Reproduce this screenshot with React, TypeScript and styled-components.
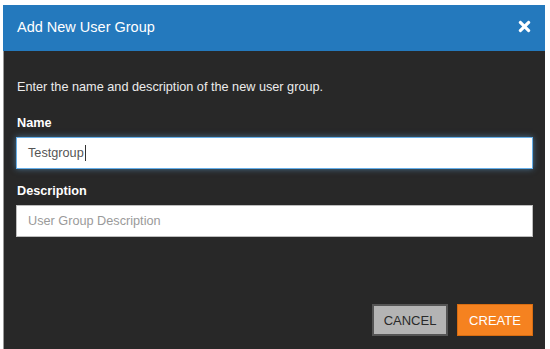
import React from "react";
import styled, { createGlobalStyle } from "styled-components";
import { FaTimes } from "react-icons/fa";

const Global = createGlobalStyle`
  html, body { margin: 0; padding: 0; background: #ffffff; }
  body { font-family: "Liberation Sans", Arial, sans-serif; }
`;

const Page = styled.div`
  padding: 5px 5px 0 3px;
  height: 349px;
  box-sizing: border-box;
  overflow: hidden;
`;

const Dialog = styled.div`
  width: 542px;
  height: 360px;
  display: flex;
  flex-direction: column;
  background: #282828;
`;

const Header = styled.div`
  height: 46px;
  box-sizing: border-box;
  background: #2479bd;
  display: flex;
  align-items: center;
  justify-content: space-between;
  padding: 0 12px 3px 14px;
`;

const Title = styled.h1`
  margin: 0;
  font-size: 14.5px;
  font-weight: normal;
  color: #ffffff;
`;

const Close = styled.button`
  border: 0;
  background: none;
  padding: 0;
  color: #ffffff;
  display: flex;
  align-items: center;
  cursor: pointer;
`;

const Body = styled.div`
  flex: 1;
  border-left: 1px solid #9a9a9a;
  padding: 27px 12px 0 12px;
  display: flex;
  flex-direction: column;
`;

const Intro = styled.p`
  margin: 0 0 18px 1px;
  font-size: 12.7px;
  line-height: 18px;
  color: #ececec;
`;

const Label = styled.label`
  margin: 0 0 5px 1px;
  font-size: 12.7px;
  line-height: 18px;
  font-weight: bold;
  color: #ffffff;
`;

const Field = styled.div<{ $focused?: boolean }>`
  height: 32px;
  box-sizing: border-box;
  background: #ffffff;
  border: 1px solid ${(p) => (p.$focused ? "#66afe9" : "#bdbdbd")};
  box-shadow: ${(p) =>
    p.$focused ? "0 0 6px rgba(102, 175, 233, 0.55)" : "none"};
  display: flex;
  align-items: center;
  padding: 0 11px;
  font-size: 12.7px;
  color: ${(p) => (p.$focused ? "#555555" : "#9a9a9a")};
  margin-bottom: 13px;
`;

const Caret = styled.span`
  display: inline-block;
  width: 1px;
  height: 16px;
  background: #333333;
  margin-left: 1px;
`;

const Actions = styled.div`
  margin-top: 54px;
  display: flex;
  justify-content: flex-end;
  gap: 9px;
`;

const Button = styled.button<{ $primary?: boolean }>`
  width: 76px;
  height: 32px;
  box-sizing: border-box;
  font-family: "Liberation Sans", Arial, sans-serif;
  font-size: 13px;
  text-transform: uppercase;
  cursor: pointer;
  background: ${(p) => (p.$primary ? "#f58220" : "#b4b4b4")};
  color: ${(p) => (p.$primary ? "#ffffff" : "#2a2a2a")};
  border: ${(p) => (p.$primary ? "1px solid #d86d12" : "2px solid #555555")};
  padding: 0;
`;

export default function App() {
  return (
    <>
      <Global />
      <Page>
        <Dialog>
          <Header>
            <Title>Add New User Group</Title>
            <Close aria-label="Close">
              <FaTimes size={17} />
            </Close>
          </Header>
          <Body>
            <Intro>Enter the name and description of the new user group.</Intro>
            <Label>Name</Label>
            <Field $focused>
              Testgroup
              <Caret />
            </Field>
            <Label>Description</Label>
            <Field>User Group Description</Field>
            <Actions>
              <Button>Cancel</Button>
              <Button $primary>Create</Button>
            </Actions>
          </Body>
        </Dialog>
      </Page>
    </>
  );
}
